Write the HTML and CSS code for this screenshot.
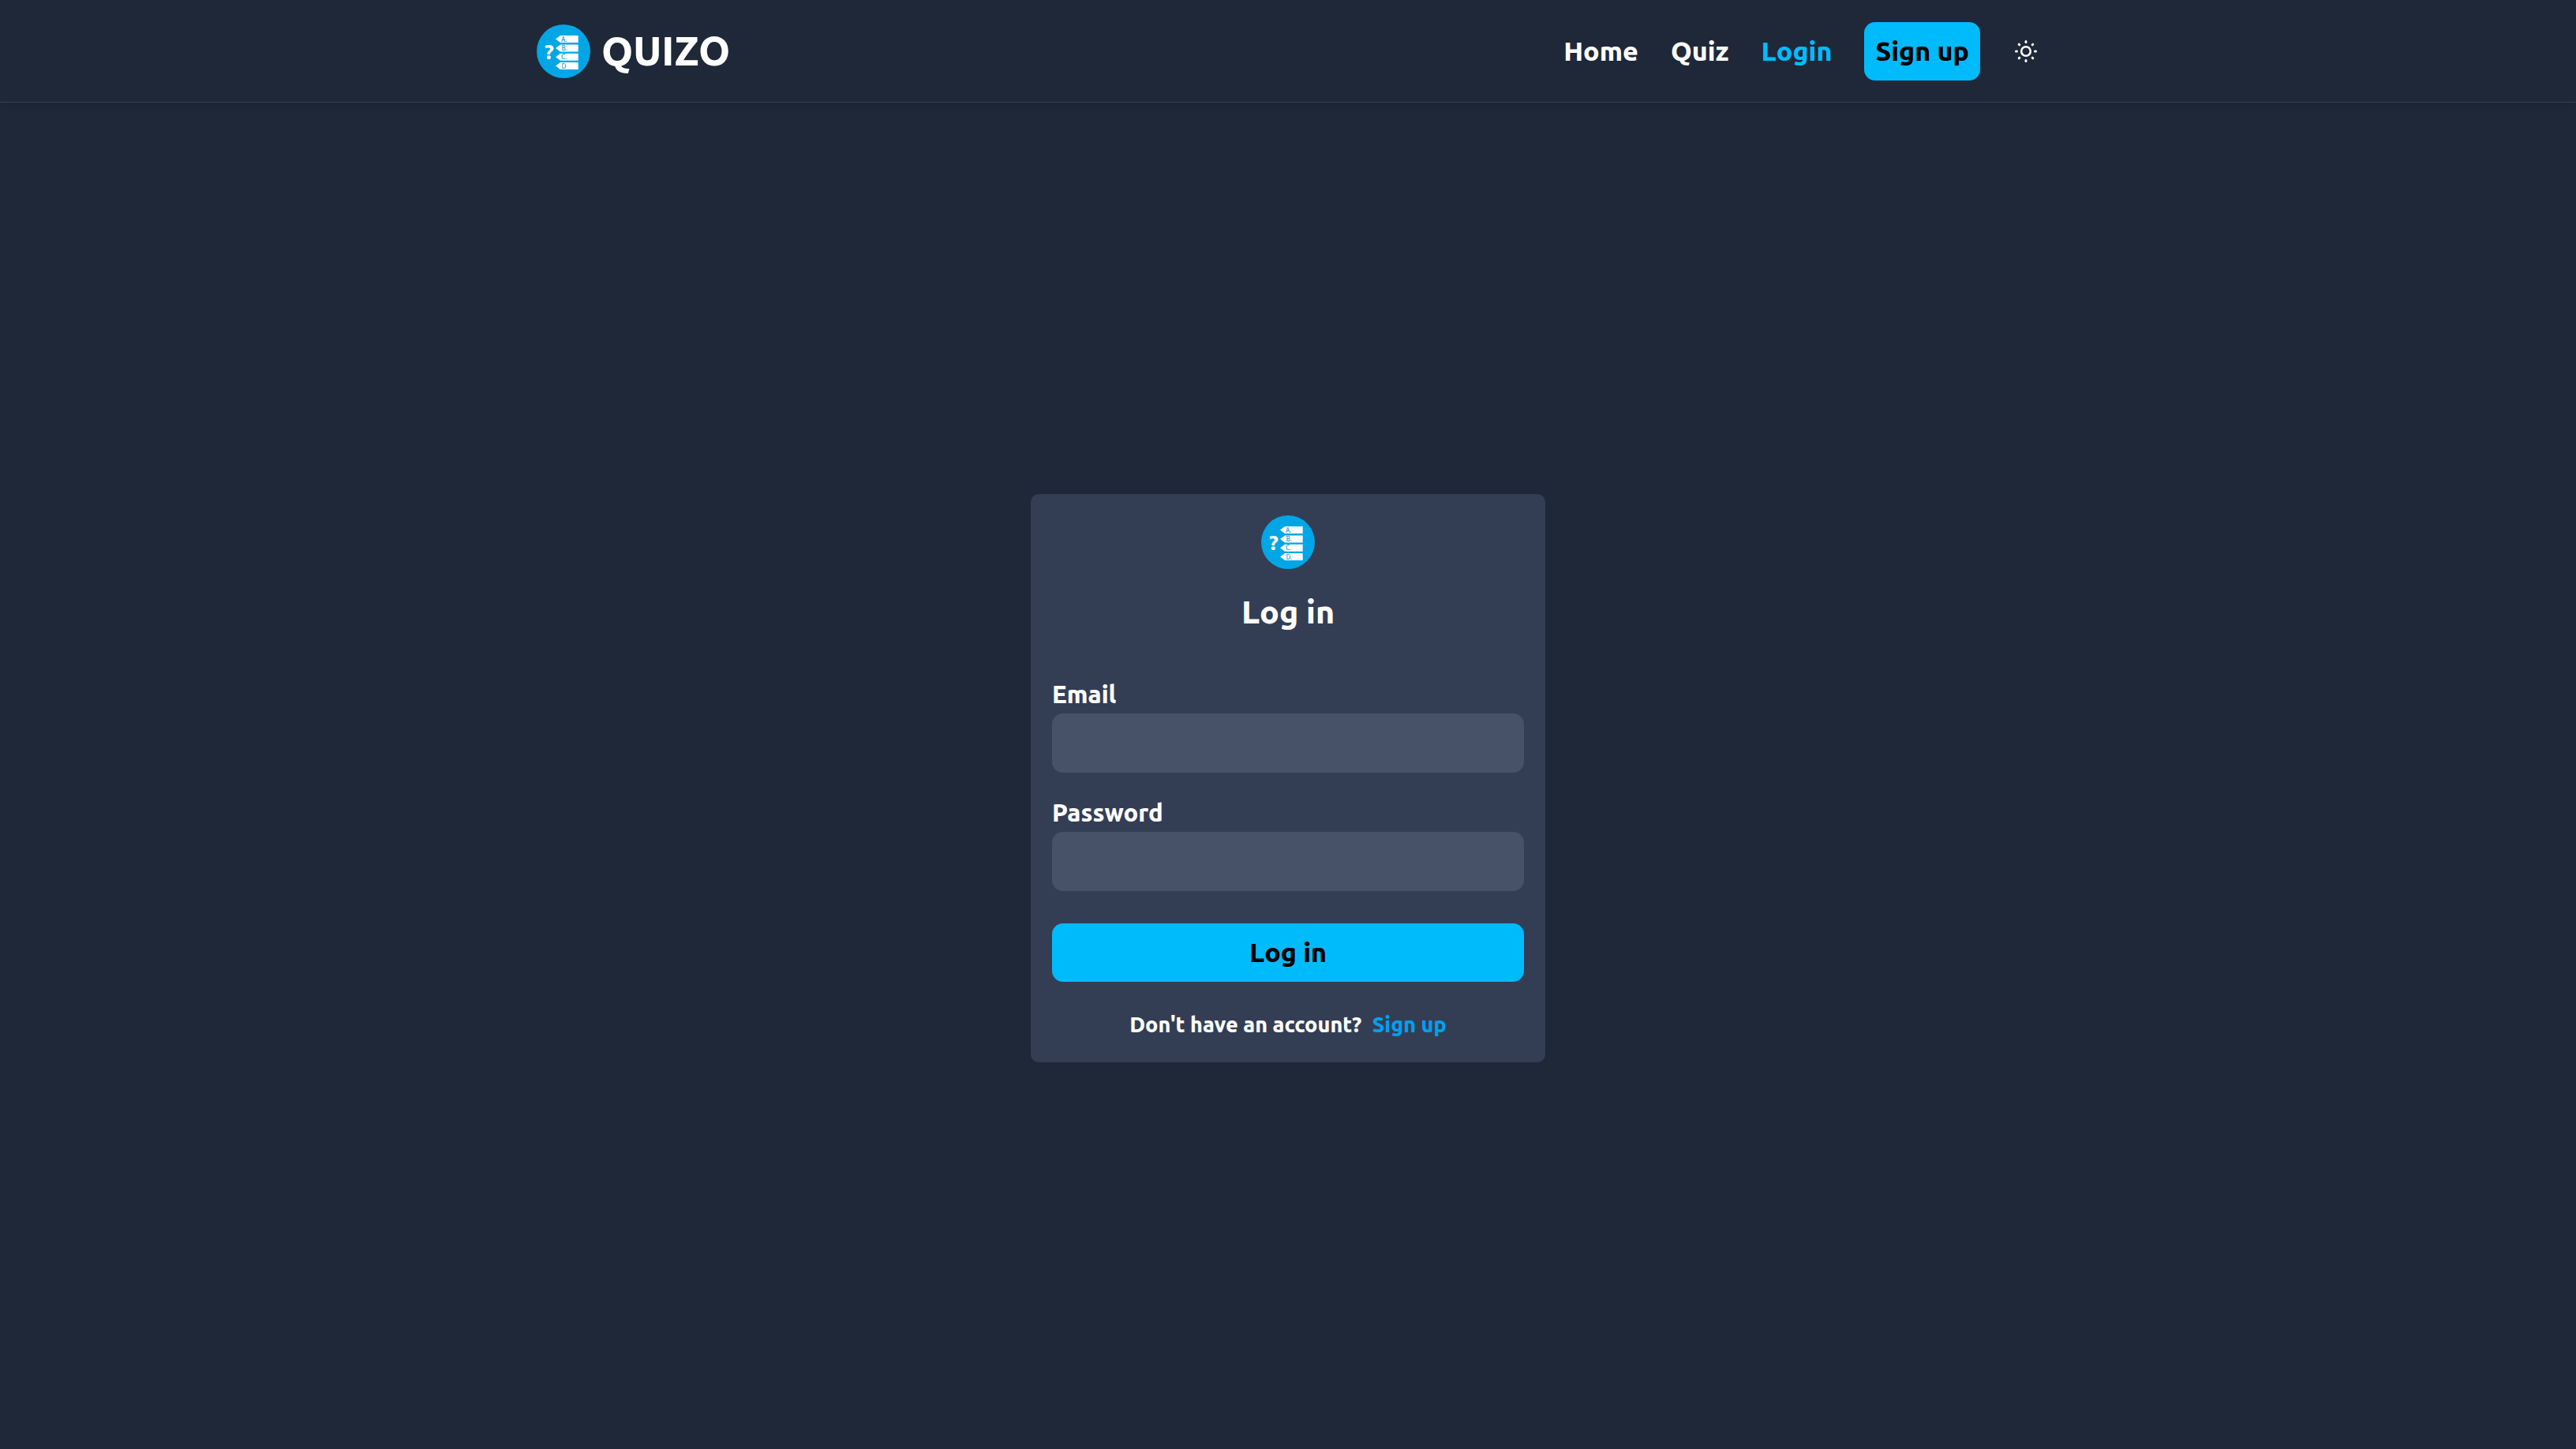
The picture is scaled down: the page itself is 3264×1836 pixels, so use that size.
FILE: index.html
```html
<!DOCTYPE html>
<html lang="en">
<head>
<meta charset="utf-8">
<meta name="viewport" content="width=device-width, initial-scale=1">
<title>Quizo - Log in</title>
<link rel="stylesheet" href="styles.css">
</head>
<body>
<header class="header">
  <div class="header-inner">
    <a class="brand" href="#">
      <svg class="logo" viewBox="0 0 68 68" aria-hidden="true">
        <circle cx="34" cy="34" r="34" fill="#00a6e5"/>
        <g fill="#fff">
          <path d="M24 18.500 30 14h22.700v9H30z"/>
          <path d="M24 30 30 25.500h22.700v9H30z"/>
          <path d="M24 41.200 30 36.700h22.700v9H30z"/>
          <path d="M24 52.500 30 48h22.700v9H30z"/>
          <text x="10" y="44" class="logo-mark">?</text>
        </g>
        <g class="logo-letters">
          <text x="31" y="21.500">A.</text>
          <text x="31.500" y="33">B.</text>
          <text x="31" y="44">C.</text>
          <text x="31.500" y="55.500">D</text>
        </g>
      </svg>
      <span class="brand-name">QUIZO</span>
    </a>
    <nav class="nav">
      <a class="nav-link" href="#">Home</a>
      <a class="nav-link" href="#">Quiz</a>
      <a class="nav-link active" href="#">Login</a>
      <a class="button" href="#">Sign up</a>
      <button class="theme" type="button" aria-label="Toggle theme">
        <svg viewBox="0 0 34 34" fill="none" stroke="currentColor" stroke-width="3" stroke-linecap="round" aria-hidden="true">
          <circle cx="17" cy="17" r="5.800" stroke-width="2.600"/>
          <path d="M17 4.500v1M17 28.500v1M4.500 17h1M28.500 17h1M8.200 8.200l.6.6M25.200 25.200l.6.6M8.200 25.800l.6-.6M25.200 8.800l.6-.6"/>
        </svg>
      </button>
    </nav>
  </div>
</header>

<main class="main">
  <form class="card">
    <svg class="logo" viewBox="0 0 68 68" aria-hidden="true">
      <circle cx="34" cy="34" r="34" fill="#00a6e5"/>
      <g fill="#fff">
        <path d="M24 18.500 30 14h22.700v9H30z"/>
        <path d="M24 30 30 25.500h22.700v9H30z"/>
        <path d="M24 41.200 30 36.700h22.700v9H30z"/>
        <path d="M24 52.500 30 48h22.700v9H30z"/>
        <text x="10" y="44" class="logo-mark">?</text>
      </g>
      <g class="logo-letters">
        <text x="31" y="21.500">A.</text>
        <text x="31.500" y="33">B.</text>
        <text x="31" y="44">C.</text>
        <text x="31.500" y="55.500">D.</text>
      </g>
    </svg>
    <h1>Log in</h1>
    <div class="field">
      <label for="email">Email</label>
      <input id="email" type="email" autocomplete="email">
    </div>
    <div class="field">
      <label for="password">Password</label>
      <input id="password" type="password" autocomplete="current-password">
    </div>
    <button class="button submit" type="submit">Log in</button>
    <p class="switch">Don't have an account? <a href="#">Sign up</a></p>
  </form>
</main>
</body>
</html>
```
FILE: styles.css
```css
* {
  box-sizing: border-box;
}

body {
  margin: 0;
  min-height: 100vh;
  display: flex;
  flex-direction: column;
  background: #1f2838;
  color: #fff;
  font-family: Ubuntu, "Noto Sans", sans-serif;
  font-weight: 800;
}

a {
  color: inherit;
  text-decoration: none;
}

.logo {
  display: block;
  width: 68px;
  height: 68px;
}

.logo-mark {
  font: 800 26px Ubuntu, "Noto Sans", sans-serif;
}

.logo-letters {
  fill: #00a6e5;
  font: 500 8px "Noto Sans", sans-serif;
}

.header {
  border-bottom: 1px solid #374151;
  box-shadow: 0 2px 12px rgba(0, 0, 0, 0.12);
}

.header-inner {
  display: flex;
  align-items: center;
  justify-content: space-between;
  max-width: 1958px;
  min-height: 129px;
  margin: 0 auto;
  padding: 0 27px;
}

.brand {
  display: flex;
  align-items: center;
  gap: 14px;
  font-size: 51px;
  line-height: 64px;
}

.brand-name,
.nav-link {
  padding-bottom: 2px;
}

.nav {
  display: flex;
  align-items: center;
  gap: 41px;
  font-size: 34px;
  line-height: 48px;
}

.active {
  color: #00bcff;
}

.button {
  padding: 12px 14px 14px;
  border: 0;
  border-radius: 14px;
  background: #00bbfc;
  color: #000;
  font-family: inherit;
  font-size: 34px;
  font-weight: 800;
  line-height: 48px;
  text-align: center;
}

.theme {
  width: 34px;
  height: 34px;
  padding: 0;
  border: 0;
  background: none;
  color: #fff;
}

.theme svg {
  display: block;
}

.main {
  flex: 1;
  display: flex;
  align-items: center;
  justify-content: center;
  padding: 6px 0 0;
}

.card {
  display: flex;
  flex-direction: column;
  width: 100%;
  max-width: 652px;
  padding: 27px 27px 25px;
  border-radius: 10px;
  background: #333e55;
}

.card .logo {
  align-self: center;
}

h1 {
  margin: 27px 0 54px;
  font-size: 41px;
  font-weight: 800;
  line-height: 54px;
  text-align: center;
}

.field {
  display: flex;
  flex-direction: column;
  margin-bottom: 27px;
}

label {
  font-size: 31px;
  line-height: 48px;
}

input {
  width: 100%;
  height: 75px;
  padding: 0 14px;
  border: 0;
  border-radius: 14px;
  background: #475269;
  color: #fff;
  font: inherit;
  font-size: 31px;
}

.submit {
  margin-top: 14px;
}

.switch {
  margin: 31px 0 0;
  font-size: 27px;
  line-height: 46px;
  text-align: center;
}

.switch a {
  margin-left: 7px;
  color: #00a0f0;
}
```
